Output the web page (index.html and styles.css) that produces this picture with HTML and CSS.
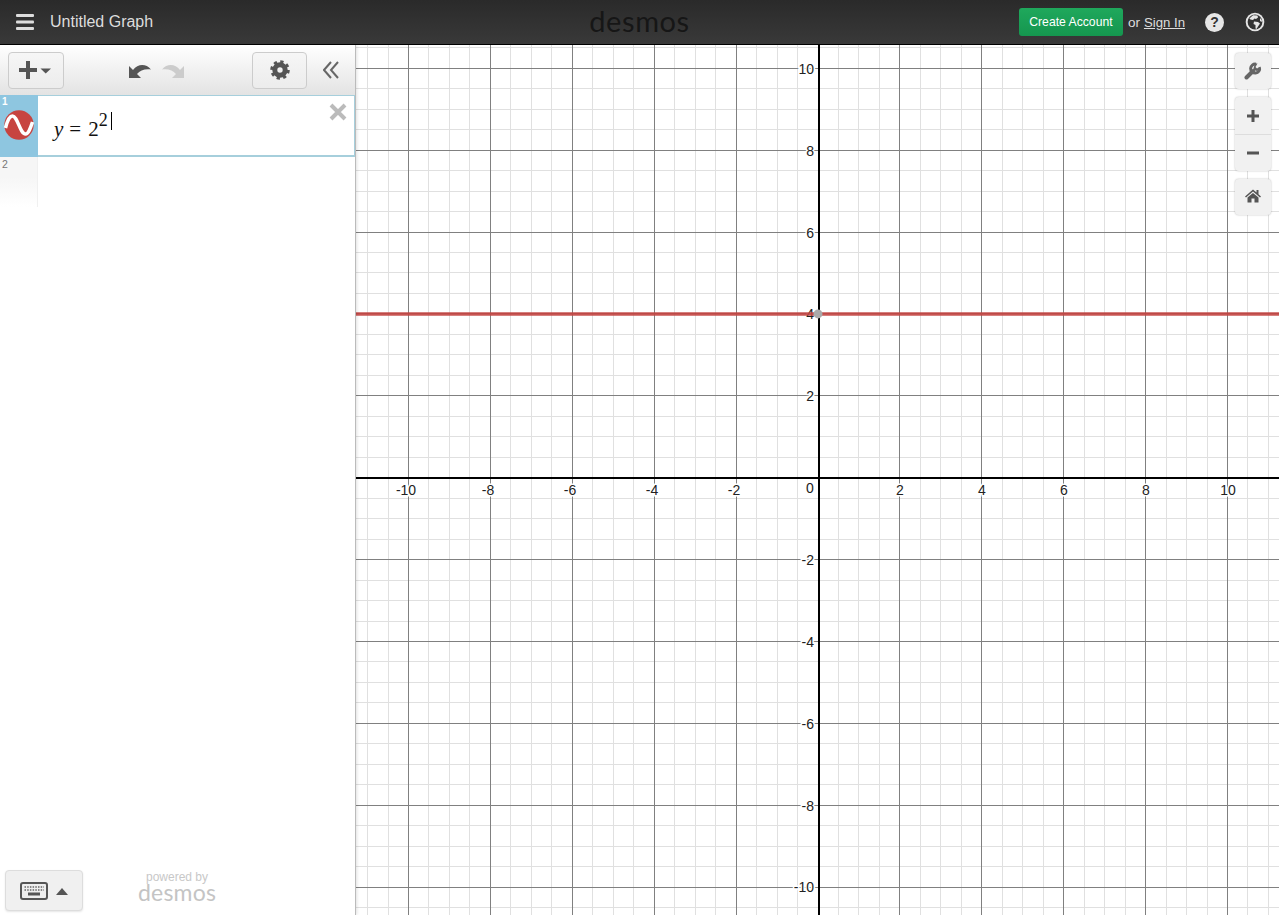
FILE: index.html
```html
<!DOCTYPE html>
<html lang="en">
<head>
<meta charset="utf-8">
<title>Untitled Graph - Desmos</title>
<link rel="stylesheet" href="styles.css">
</head>
<body>
<header class="topbar">
  <div class="top-left">
    <svg class="ico-menu" width="18" height="16" viewBox="0 0 18 16"><rect y="0" width="18" height="3" rx="1"/><rect y="6.5" width="18" height="3" rx="1"/><rect y="13" width="18" height="3" rx="1"/></svg>
    <span class="title">Untitled Graph</span>
  </div>
  <div class="logo">desmos</div>
  <div class="top-right">
    <a class="create">Create Account</a>
    <span class="or">or</span>
    <a class="signin">Sign In</a>
    <span class="help">?</span>
    <svg class="globe" width="20" height="20" viewBox="0 0 20 20"><circle cx="10" cy="10" r="9.3" class="globe-bg"/><circle cx="10" cy="10" r="7.4" class="globe-sea"/><path class="globe-bg" d="M8 3.2 L12.5 3.4 L13 5.5 L11 7 L9.5 6.4 L8 8 L5.5 7.5 L4.4 6.5 Z M9 9.5 L13 10 L15 11.5 L13 14.5 L11.5 17 L10.5 16.5 L10.5 13 L8.5 12 Z M15 6 L16.8 8 L16.8 10 L15 9 Z"/></svg>
  </div>
</header>
<main class="app">
  <aside class="panel">
    <div class="toolbar">
      <button class="tbtn add">
        <svg width="33" height="18" viewBox="0 0 33 18"><rect x="0" y="7" width="18" height="4" class="ic"/><rect x="7" y="0" width="4" height="18" class="ic"/><path class="ic" d="M21.500 7.500H32L26.700 12.500Z"/></svg>
      </button>
      <div class="history">
        <svg width="24" height="17" viewBox="0 0 24 17"><path class="ic" d="M1 4V16H13L9 12C12 8.500 17 6.500 23 7.500C18 1.500 10 1.500 5 8Z"/></svg>
        <svg width="24" height="17" viewBox="0 0 24 17"><path class="ic-off" d="M23 4V16H11L15 12C12 8.500 7 6.500 1 7.500C6 1.500 14 1.500 19 8Z"/></svg>
      </div>
      <button class="tbtn gear">
        <svg width="20" height="20" viewBox="0 0 20 20"><circle cx="10" cy="10" r="5.200" class="gear-ring"/><circle cx="10" cy="10" r="8" class="gear-teeth"/></svg>
      </button>
      <svg class="collapse" width="16" height="18" viewBox="0 0 16 18"><path class="chev" d="M8 1L1 9L8 17M15 1L8 9L15 17"/></svg>
    </div>
    <div class="expr active">
      <div class="gutter">
        <span class="idx">1</span>
        <svg class="wave" width="32" height="32" viewBox="0 0 32 32"><circle cx="16" cy="16" r="14.700" class="wave-bg"/><path class="wave-line" d="M2.500 19C4.500 11 6.500 7 9.500 7C14.500 7 17 25 22.500 25C25.500 25 27.500 19 29.500 13"/></svg>
      </div>
      <div class="math">
        <i class="mi">y</i><span class="eq">=</span><span>2</span><sup class="msup">2</sup><span class="caret"></span>
      </div>
      <svg class="close" width="18" height="18" viewBox="0 0 18 18"><path class="close-x" d="M2 2L16 16M16 2L2 16"/></svg>
    </div>
    <div class="expr blank">
      <div class="gutter"><span class="idx">2</span></div>
    </div>
    <div class="panel-foot">
      <button class="kbd">
        <svg width="48" height="18" viewBox="0 0 48 18"><rect x="1" y="1" width="26" height="16" rx="2" class="kb-body"/><path class="kb-keys" d="M4.500 5H24M4.500 8H24"/><rect x="8" y="10.500" width="12" height="3" class="ic"/><path class="ic" d="M36 13L42 6L48 13Z"/></svg>
      </button>
      <div class="powered"><span class="pw">powered by</span><span class="pl">desmos</span></div>
    </div>
  </aside>
  <section class="graph">
    <svg class="plot" viewBox="356 45 923 870" width="923" height="870">
      <path class="minor" d="M367.55 45V915M388.03 45V915M428.98 45V915M449.45 45V915M469.93 45V915M510.88 45V915M531.35 45V915M551.83 45V915M592.78 45V915M613.25 45V915M633.73 45V915M674.68 45V915M695.15 45V915M715.63 45V915M756.58 45V915M777.05 45V915M797.53 45V915M838.48 45V915M858.95 45V915M879.43 45V915M920.38 45V915M940.85 45V915M961.33 45V915M1002.28 45V915M1022.75 45V915M1043.23 45V915M1084.18 45V915M1104.65 45V915M1125.13 45V915M1166.08 45V915M1186.55 45V915M1207.03 45V915M1247.98 45V915M1268.45 45V915"/>
      <path class="minor" d="M356 47.73H1279M356 88.68H1279M356 109.15H1279M356 129.63H1279M356 170.58H1279M356 191.05H1279M356 211.53H1279M356 252.48H1279M356 272.95H1279M356 293.43H1279M356 334.38H1279M356 354.85H1279M356 375.33H1279M356 416.28H1279M356 436.75H1279M356 457.23H1279M356 498.18H1279M356 518.65H1279M356 539.13H1279M356 580.08H1279M356 600.55H1279M356 621.03H1279M356 661.98H1279M356 682.45H1279M356 702.93H1279M356 743.88H1279M356 764.35H1279M356 784.83H1279M356 825.78H1279M356 846.25H1279M356 866.73H1279M356 907.68H1279"/>
      <path class="major" d="M408.5 45V915M490.4 45V915M572.3 45V915M654.2 45V915M736.1 45V915M899.9 45V915M981.8 45V915M1063.7 45V915M1145.6 45V915M1227.5 45V915"/>
      <path class="major" d="M356 68.2H1279M356 150.1H1279M356 232H1279M356 313.9H1279M356 395.8H1279M356 559.6H1279M356 641.5H1279M356 723.4H1279M356 805.3H1279M356 887.2H1279"/>
      <path class="axis" d="M819 45V915M356 477.7H1279"/>
      <g class="lab-x">
        <text x="406" y="495">-10</text><text x="488" y="495">-8</text><text x="570" y="495">-6</text><text x="652" y="495">-4</text><text x="734" y="495">-2</text>
        <text x="810" y="493">0</text>
        <text x="900" y="495">2</text><text x="982" y="495">4</text><text x="1064" y="495">6</text><text x="1146" y="495">8</text><text x="1228" y="495">10</text>
      </g>
      <g class="lab-y">
        <text x="814" y="74">10</text><text x="814" y="156">8</text><text x="814" y="238">6</text><text x="814" y="319">4</text><text x="814" y="401">2</text>
        <text x="814" y="565">-2</text><text x="814" y="647">-4</text><text x="814" y="729">-6</text><text x="814" y="811">-8</text><text x="814" y="892">-10</text>
      </g>
      <path class="curve" d="M356 313.9H1279"/>
      <circle class="point" cx="818" cy="313.9" r="4.500"/>
    </svg>
    <div class="controls">
      <div class="ctl">
        <button class="cbtn">
          <svg width="18" height="18" viewBox="0 0 18 18"><path class="wr-h" d="M2.500 15.500L9 9"/><path class="wr-a" d="M15.500 5.500A4.500 4.500 0 1 1 12 2.200"/><path class="wr-f" d="M11 1.500L13.500 1.500L11.500 5L13 6.500L16.500 4.500L16.500 7L13 9L9 8Z"/></svg>
        </button>
      </div>
      <div class="ctl">
        <button class="cbtn zoomb">
          <svg width="12" height="12" viewBox="0 0 12 12"><rect y="4.500" width="12" height="3" class="ic"/><rect x="4.500" width="3" height="12" class="ic"/></svg>
        </button>
        <button class="cbtn zoomb">
          <svg width="12" height="12" viewBox="0 0 12 12"><rect y="4.500" width="12" height="3" class="ic"/></svg>
        </button>
      </div>
      <div class="ctl">
        <button class="cbtn home">
          <svg width="16" height="14" viewBox="0 0 16 14"><path class="ic" d="M8 0.500L11.500 3.500V1H13.500V5.200L16 7.500L15 8.600L8 2.600L1 8.600L0 7.500Z"/><path class="ic" d="M2.500 8.500L8 4L13.500 8.500V13.500H9.500V9.500H6.500V13.500H2.500Z"/></svg>
        </button>
      </div>
    </div>
  </section>
</main>
</body>
</html>
```

FILE: styles.css
```css
* { box-sizing: border-box; }
html, body { margin: 0; height: 100%; overflow: hidden; }
body {
  display: flex;
  flex-direction: column;
  background: #fff;
  font-family: "Liberation Sans", Arial, sans-serif;
}
button { margin: 0; padding: 0; font: inherit; }

/* top bar */
.topbar {
  flex: none;
  height: 45px;
  display: grid;
  grid-template-columns: 1fr auto 1fr;
  align-items: center;
  background: linear-gradient(#2a2a2a, #393939);
  border-bottom: 1px solid #000;
  color: #ddd;
}
.top-left { display: flex; align-items: center; padding-left: 16px; gap: 16px; }
.ico-menu { fill: #ddd; display: block; }
.title { font-size: 16px; color: #ddd; }
.logo {
  font-family: Lato, "Open Sans", sans-serif;
  font-weight: 400;
  font-size: 29px;
  letter-spacing: 0.6px;
  line-height: 42px;
  height: 44px;
  color: #161616;
}
.top-right { display: flex; align-items: center; justify-content: flex-end; padding-right: 14px; }
.create {
  width: 104px;
  height: 28px;
  line-height: 28px;
  text-align: center;
  font-size: 12.200px;
  color: #fff;
  background: linear-gradient(#1fa85c, #15964f);
  border-radius: 3px;
}
.or { margin-left: 5px; font-size: 13.500px; }
.signin { margin-left: 4px; font-size: 13.200px; color: #ddd; text-decoration: underline; }
.help {
  width: 19px;
  height: 19px;
  margin-left: 20px;
  border-radius: 50%;
  background: #e6e6e6;
  color: #333;
  font-size: 14px;
  font-weight: bold;
  line-height: 19px;
  text-align: center;
}
.globe { margin-left: 21px; display: block; }
.globe-bg { fill: #e6e6e6; }
.globe-sea { fill: #333; }

/* layout */
.app { flex: 1; display: flex; min-height: 0; }
.panel {
  flex: none;
  width: 356px;
  display: flex;
  flex-direction: column;
  border-right: 1px solid #bbb;
  background: #fff;
  box-shadow: 1px 0 3px rgba(0, 0, 0, .12);
  z-index: 2;
}

/* toolbar */
.toolbar {
  flex: none;
  height: 50px;
  display: flex;
  align-items: center;
  padding: 0 16px 0 8px;
  background: linear-gradient(#fff, #e3e3e3);
}
.tbtn {
  height: 37px;
  border: 1px solid #ccc;
  border-radius: 4px;
  background: linear-gradient(#f6f6f6, #ececec);
  display: flex;
  align-items: center;
  justify-content: center;
}
.add { width: 56px; padding-right: 1px; }
.gear { width: 55px; margin-right: 16px; }
.history { flex: 1; display: flex; justify-content: center; gap: 9px; padding-right: 3px; }
.history svg, .collapse { display: block; }
.ic { fill: #555; }
.ic-off { fill: #ccc; }
.gear-ring { fill: none; stroke: #555; stroke-width: 5; }
.gear-teeth { fill: none; stroke: #555; stroke-width: 3.500; stroke-dasharray: 3.140 3.140; }
.chev { fill: none; stroke: #666; stroke-width: 2; }

/* expression list */
.expr { flex: none; display: flex; position: relative; }
.gutter { width: 38px; flex: none; position: relative; }
.idx { position: absolute; left: 2px; top: 2px; font-size: 10px; line-height: 12px; }
.active {
  height: 62px;
  border: 1px solid #a6cfdc;
  border-left: none;
  border-bottom-width: 2px;
}
.active .gutter { background: #8ec6e0; margin-top: -1px; margin-bottom: -2px; }
.active .idx { color: #fff; font-weight: bold; top: 1px; }
.wave { position: absolute; left: 3px; top: 14px; }
.wave-bg { fill: #c74440; }
.wave-line { fill: none; stroke: #fff; stroke-width: 3.500; }
.math {
  display: flex;
  align-items: baseline;
  padding: 21px 0 0 16px;
  font-family: "Liberation Serif", "Times New Roman", serif;
  font-size: 21px;
  line-height: 24px;
  color: #111;
}
.mi { padding-right: 6px; }
.eq { padding-right: 7px; }
.msup { font-size: 18px; line-height: 16px; position: relative; top: -10px; vertical-align: baseline; }
.caret {
  width: 1px;
  height: 18px;
  margin-left: 3px;
  background: #000;
  align-self: flex-start;
  position: relative;
  top: -5px;
}
.close { position: absolute; right: 7px; top: 7px; }
.close-x { fill: none; stroke: #bbb; stroke-width: 4; }
.blank { height: 50px; }
.blank .gutter {
  background: linear-gradient(#f6f6f6, #f6f6f6 40%, #fff);
  border-right: 1px solid #f0f0f0;
}
.blank .idx { color: #777; font-size: 10.500px; top: 1px; }

/* panel footer */
.panel-foot {
  margin-top: auto;
  display: flex;
  align-items: flex-end;
  padding: 0 0 4px 5px;
}
.kbd {
  width: 78px;
  height: 41px;
  border: 1px solid #ddd;
  border-radius: 4px;
  background: #f0f0f0;
  box-shadow: 0 1px 2px rgba(0, 0, 0, .1);
  display: flex;
  align-items: center;
  justify-content: center;
}
.kb-body { fill: #eee; stroke: #555; stroke-width: 2; }
.kb-keys { fill: none; stroke: #666; stroke-width: 1.500; stroke-dasharray: 1.500 1.200; }
.powered {
  width: 78px;
  margin-left: 55px;
  margin-bottom: 9px;
  display: flex;
  flex-direction: column;
  align-items: center;
  color: #c8c8c8;
}
.pw { font-size: 12px; line-height: 12px; }
.pl {
  font-family: Lato, "Open Sans", sans-serif;
  font-size: 23px;
  line-height: 19px;
  letter-spacing: 0.2px;
  color: #c4c4c4;
}

/* graph */
.graph { flex: 1; position: relative; min-width: 0; overflow: hidden; }
.plot { display: block; }
.minor { fill: none; stroke: #e0e0e0; stroke-width: 1; shape-rendering: crispEdges; }
.major { fill: none; stroke: #808080; stroke-width: 1; shape-rendering: crispEdges; }
.axis { fill: none; stroke: #000; stroke-width: 2; shape-rendering: crispEdges; }
.lab-x text, .lab-y text {
  font-family: "Liberation Sans", Arial, sans-serif;
  font-size: 14px;
  fill: #222;
  paint-order: stroke;
  stroke: #fff;
  stroke-width: 3px;
}
.lab-x { text-anchor: middle; }
.lab-y { text-anchor: end; }
.curve { fill: none; stroke: #c24340; stroke-width: 3.500; opacity: .9; }
.point { fill: #aaa; }

/* floating controls */
.controls {
  position: absolute;
  top: 8px;
  right: 8px;
  display: flex;
  flex-direction: column;
  gap: 8px;
}
.ctl {
  width: 36px;
  border-radius: 4px;
  background: #f1f1f1;
  box-shadow: 0 0 2px rgba(0, 0, 0, .28);
  display: flex;
  flex-direction: column;
}
.cbtn {
  height: 36px;
  border: none;
  background: none;
  display: flex;
  align-items: center;
  justify-content: center;
}
.zoomb { height: 37px; }
.zoomb + .zoomb { border-top: 1px solid #ddd; }
.home { padding-bottom: 2px; }
.wr-h { fill: none; stroke: #666; stroke-width: 4; stroke-linecap: round; }
.wr-a { fill: none; stroke: #666; stroke-width: 3; }
.wr-f { fill: #666; }
```
